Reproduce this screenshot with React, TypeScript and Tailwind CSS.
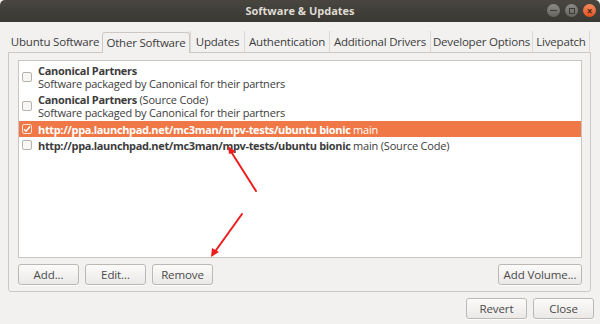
import React from 'react';

const font = { fontFamily: '"Open Sans", "DejaVu Sans", sans-serif' };

const tabs = [
  { label: 'Ubuntu Software', w: 'w-[94px]' },
  { label: 'Other Software', w: 'w-[88px]', active: true },
  { label: 'Updates', w: 'w-[54px]' },
  { label: 'Authentication', w: 'w-[85px]' },
  { label: 'Additional Drivers', w: 'w-[101px]' },
  { label: 'Developer Options', w: 'w-[102px]' },
  { label: 'Livepatch', w: 'w-[58px]' },
];

const Check = ({ checked }: { checked?: boolean }) => (
  <div
    className={
      'w-[10px] h-[10px] shrink-0 rounded-[2px] border flex items-center justify-center ' +
      (checked ? 'border-[#fbe0d4] bg-[#f07746]' : 'border-[#b6b3ae] bg-[#f7f6f5]')
    }
  >
    {checked && (
      <svg width="8" height="8" viewBox="0 0 8 8">
        <path d="M1 4.2 L3.1 6.2 L7 1.5" stroke="#fff" strokeWidth="1.5" fill="none" />
      </svg>
    )}
  </div>
);

const Button = ({ children, w }: { children: React.ReactNode; w: string }) => (
  <button
    className={
      w +
      ' h-[21px] rounded-[3px] border border-[#bcb9b4] bg-gradient-to-b from-[#fbfbfa] to-[#ebe9e7] text-[11.5px] tracking-[-0.1px] text-[#4a4a4a] whitespace-nowrap shadow-[0_1px_0_rgba(255,255,255,0.8)]'
    }
  >
    {children}
  </button>
);

export default function App() {
  return (
    <div className="relative w-[600px] h-[324px] bg-[#f2f1f0] flex flex-col overflow-hidden" style={font}>
      {/* title bar */}
      <div className="relative h-[22px] shrink-0 rounded-t-[5px] bg-gradient-to-b from-[#48463f] to-[#393834] flex items-center justify-center">
        <span className="text-[11px] font-bold text-[#dfdbd2]">Software &amp; Updates</span>
        <div className="absolute right-[4px] top-[4px] flex gap-[5px]">
          <div className="w-[13px] h-[13px] rounded-full bg-gradient-to-b from-[#8d8b86] to-[#65635e] flex items-center justify-center">
            <div className="w-[7px] h-[1.5px] bg-[#3c3b37]" />
          </div>
          <div className="w-[13px] h-[13px] rounded-full bg-gradient-to-b from-[#8d8b86] to-[#65635e] flex items-center justify-center">
            <div className="w-[6px] h-[6px] border border-[#3c3b37]" />
          </div>
          <div className="w-[13px] h-[13px] rounded-full bg-gradient-to-b from-[#f58a5e] to-[#e0511e] flex items-center justify-center text-[#4a2414] text-[10px] leading-none font-bold">
            ×
          </div>
        </div>
      </div>

      {/* tabs */}
      <div className="flex pl-[8px] mt-[9px] h-[21px] shrink-0 items-end">
        {tabs.map((t, i) =>
          t.active ? (
            <div
              key={t.label}
              className={t.w + ' h-[21px] -mb-px z-10 border border-b-0 border-[#cdc8c3] rounded-t-[3px] bg-[#f2f1f0] flex items-center justify-center text-[11.5px] tracking-[-0.2px] whitespace-nowrap text-[#3c3c3c]'}
            >
              {t.label}
            </div>
          ) : (
            <div
              key={t.label}
              className={
                t.w +
                ' h-[21px] flex items-center justify-center text-[11.5px] tracking-[-0.2px] whitespace-nowrap text-[#3c3c3c] ' +
                (i > 1 ? 'border-l border-[#dcd8d3]' : '') +
                (i === tabs.length - 1 ? ' border-r border-[#dcd8d3]' : '')
              }
            >
              {t.label}
            </div>
          )
        )}
      </div>

      {/* panel */}
      <div className="ml-[8px] w-[583px] h-[240px] border border-[#cdc8c3] rounded-b-[3px] pt-[7px] pl-[9px] pr-[8px] flex flex-col">
        <div className="h-[198px] border border-[#c9c5c0] bg-white pt-[1px] flex flex-col text-[11px] tracking-[-0.2px] text-[#3c3c3c] leading-[13px]">
          <div className="flex items-center h-[29px] pl-[3px]">
            <Check />
            <div className="ml-[6px]">
              <div className="font-bold tracking-[-0.3px]">Canonical Partners</div>
              <div>Software packaged by Canonical for their partners</div>
            </div>
          </div>
          <div className="flex items-center h-[30px] pl-[3px]">
            <Check />
            <div className="ml-[6px]">
              <div>
                <span className="font-bold tracking-[-0.3px]">Canonical Partners</span> (Source Code)
              </div>
              <div>Software packaged by Canonical for their partners</div>
            </div>
          </div>
          <div className="flex items-center h-[16px] pl-[3px] bg-[#f07746] text-white">
            <Check checked />
            <div className="ml-[6px] whitespace-nowrap">
              <span className="font-bold tracking-[-0.35px]">http://ppa.launchpad.net/mc3man/mpv-tests/ubuntu bionic</span> main
            </div>
          </div>
          <div className="flex items-center h-[16px] pl-[3px]">
            <Check />
            <div className="ml-[6px] whitespace-nowrap">
              <span className="font-bold tracking-[-0.35px]">http://ppa.launchpad.net/mc3man/mpv-tests/ubuntu bionic</span> main (Source Code)
            </div>
          </div>
        </div>
        <div className="flex mt-[6px] gap-[6px]">
          <Button w="w-[61px]">Add...</Button>
          <Button w="w-[61px]">Edit...</Button>
          <Button w="w-[61px]">Remove</Button>
          <div className="flex-1" />
          <Button w="w-[84px]">Add Volume...</Button>
        </div>
      </div>

      {/* dialog buttons */}
      <div className="flex justify-end gap-[6px] pr-[6px] mt-[6px]">
        <Button w="w-[61px]">Revert</Button>
        <Button w="w-[61px]">Close</Button>
      </div>

      {/* annotation arrows */}
      <svg className="absolute left-0 top-0 pointer-events-none" width="600" height="324">
        <g stroke="#ee1c1c" strokeWidth="2" fill="#ee1c1c" strokeLinecap="round">
          <line x1="256" y1="191" x2="230" y2="150" />
          <polygon points="228,146 236,152 229,154" stroke="none" />
          <line x1="242" y1="214" x2="214" y2="253" />
          <polygon points="211,257 212,248 219,252" stroke="none" />
        </g>
      </svg>
    </div>
  );
}
